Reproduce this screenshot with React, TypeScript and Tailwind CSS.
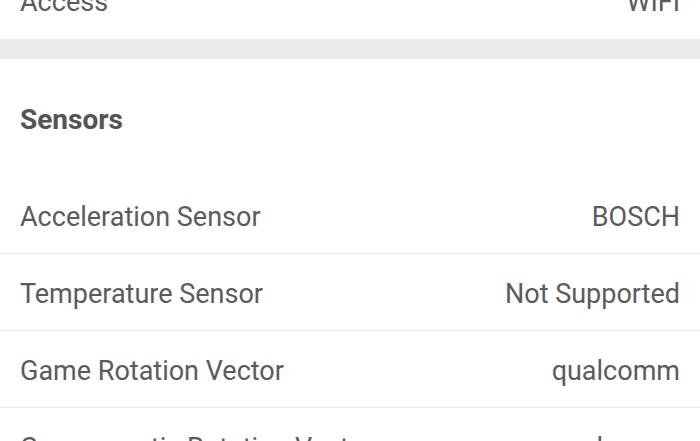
const sensors = [
  { name: "Acceleration Sensor", value: "BOSCH" },
  { name: "Temperature Sensor", value: "Not Supported" },
  { name: "Game Rotation Vector", value: "qualcomm" },
  { name: "Geomagnetic Rotation Vector", value: "qualcomm" },
]

function Row({ name, value, last }: { name: string; value: string; last?: boolean }) {
  return (
    <div
      className={
        "flex h-[77px] items-center justify-between px-5 pt-1 text-[27px] text-[#5b5b5b] " +
        (last ? "" : "border-b border-[#e9e9e9]")
      }
    >
      <span>{name}</span>
      <span>{value}</span>
    </div>
  )
}

export default function App() {
  return (
    <div
      className="h-[441px] w-[700px] overflow-hidden bg-white"
      style={{ fontFamily: "Roboto, 'Liberation Sans', sans-serif" }}
    >
      <div className="-mt-[38px]">
        <Row name="Access" value="WIFI" last />

        {/* section gap */}
        <div className="h-5 bg-[#ebebeb]" />

        <div className="flex h-[118px] items-start px-5 pt-[40px]">
          <h2 className="text-[28px] font-bold text-[#545454]">Sensors</h2>
        </div>

        {sensors.map((s) => (
          <Row key={s.name} name={s.name} value={s.value} />
        ))}
      </div>
    </div>
  )
}
